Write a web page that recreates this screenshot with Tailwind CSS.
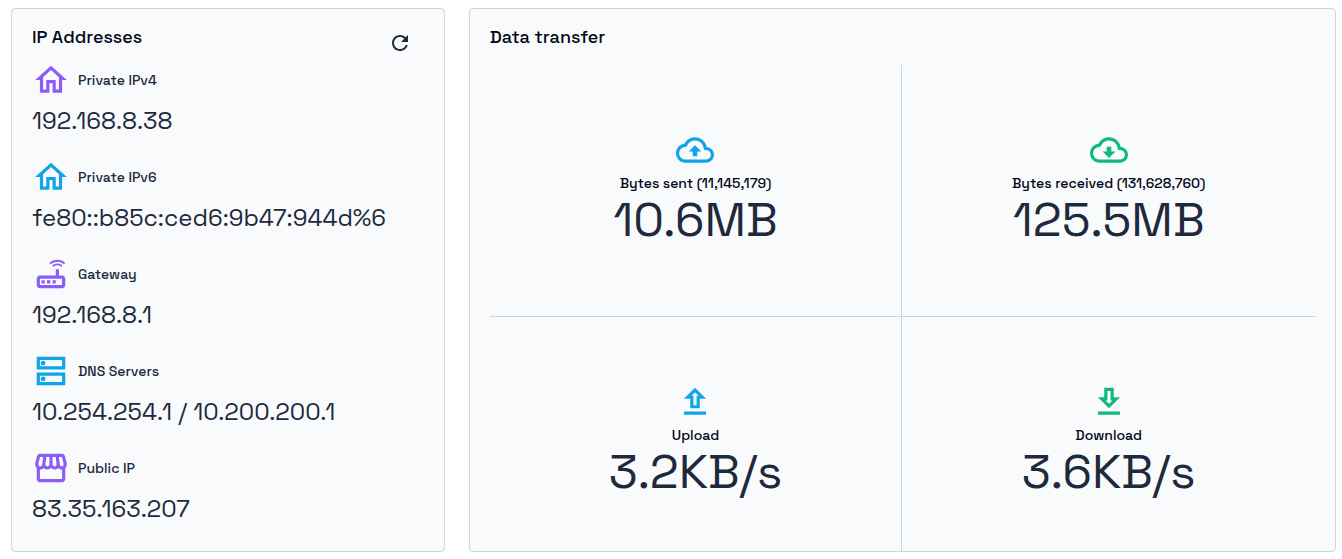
<!DOCTYPE html>
<html lang="en">
<head>
    <meta charset="UTF-8">
    <meta name="viewport" content="width=device-width, initial-scale=1">
    <title>Network</title>
    <script src="https://cdn.jsdelivr.net/npm/@tailwindcss/browser@4"></script>
</head>
<body class="bg-white text-[#1e293b] font-['Space_Grotesk',Inter,sans-serif]">

    <main class="grid grid-cols-[1fr_2fr] gap-6 pt-2 pb-[7px] pl-[11px] pr-[6px]">

        <!-- IP addresses -->
        <section class="bg-[#f8fafc] border border-[#cbd5e1] rounded px-5 pt-[14px] pb-6">
            <div class="flex items-start justify-between h-[38px]">
                <h2 class="text-lg font-medium text-[#020617]">IP Addresses</h2>
                <button type="button" aria-label="Refresh" class="flex items-center justify-center size-12 shrink-0 -mt-1 rounded-full">
                    <svg class="size-6" viewBox="0 0 24 24" fill="currentColor"><path d="M17.65 6.35A7.958 7.958 0 0 0 12 4c-4.42 0-7.99 3.58-7.99 8s3.57 8 7.99 8c3.73 0 6.84-2.55 7.73-6h-2.08A5.99 5.99 0 0 1 12 18c-3.31 0-6-2.69-6-6s2.69-6 6-6c1.66 0 3.14.69 4.22 1.78L13 11h7V4l-2.35 2.35z"/></svg>
                </button>
            </div>

            <dl class="flex flex-col gap-[19px]">
                <div>
                    <dt class="flex items-center gap-2 text-sm font-medium">
                        <svg class="size-[38px] text-[#8b5cf6]" viewBox="0 0 24 24" fill="currentColor"><path d="M12 5.69l5 4.5V18h-2v-6H9v6H7v-7.81l5-4.5M12 3L2 12h3v8h6v-6h2v6h6v-8h3L12 3z"/></svg>
                        Private IPv4
                    </dt>
                    <dd class="mt-1 text-2xl leading-9">192.168.8.38</dd>
                </div>
                <div>
                    <dt class="flex items-center gap-2 text-sm font-medium">
                        <svg class="size-[38px] text-[#0ea5e9]" viewBox="0 0 24 24" fill="currentColor"><path d="M12 5.69l5 4.5V18h-2v-6H9v6H7v-7.81l5-4.5M12 3L2 12h3v8h6v-6h2v6h6v-8h3L12 3z"/></svg>
                        Private IPv6
                    </dt>
                    <dd class="mt-1 text-2xl leading-9">fe80::b85c:ced6:9b47:944d%6</dd>
                </div>
                <div>
                    <dt class="flex items-center gap-2 text-sm font-medium">
                        <svg class="size-[38px] text-[#8b5cf6]" viewBox="0 0 24 24" fill="currentColor"><path d="M20.2 5.9l.8-.8C19.6 3.7 17.8 3 16 3s-3.6.7-5 2.1l.8.8C13 4.8 14.5 4.2 16 4.2s3 .6 4.2 1.7zm-.9.8c-.9-.9-2.1-1.4-3.3-1.4s-2.4.5-3.3 1.4l.8.8c.7-.7 1.6-1 2.5-1 .9 0 1.8.3 2.5 1l.8-.8zM19 13h-2V9h-2v4H5c-1.1 0-2 .9-2 2v4c0 1.1.9 2 2 2h14c1.1 0 2-.9 2-2v-4c0-1.1-.9-2-2-2zm0 6H5v-4h14v4zM6 16h2v2H6zm3.5 0h2v2h-2zm3.5 0h2v2h-2z"/></svg>
                        Gateway
                    </dt>
                    <dd class="mt-1 text-2xl leading-9">192.168.8.1</dd>
                </div>
                <div>
                    <dt class="flex items-center gap-2 text-sm font-medium">
                        <svg class="size-[38px] text-[#0ea5e9]" viewBox="0 0 24 24" fill="currentColor"><path fill-rule="evenodd" d="M3 3h18v8H3zM5 5v4h14V5zM3 13h18v8H3zM5 15v4h14v-4z"/><circle cx="7" cy="7" r="1.5"/><circle cx="7" cy="17" r="1.5"/></svg>
                        DNS Servers
                    </dt>
                    <dd class="mt-1 text-2xl leading-9">10.254.254.1 / 10.200.200.1</dd>
                </div>
                <div>
                    <dt class="flex items-center gap-2 text-sm font-medium">
                        <svg class="size-[38px] text-[#8b5cf6]" viewBox="0 0 24 24" fill="currentColor"><path d="M21.9 8.89l-1.05-4.37c-.22-.9-1-1.52-1.91-1.52H5.05c-.9 0-1.69.63-1.9 1.52L2.1 8.89c-.24 1.02-.02 2.06.62 2.88.08.11.19.19.28.29V19c0 1.1.9 2 2 2h14c1.1 0 2-.9 2-2v-6.94c.09-.09.2-.18.28-.28.64-.82.87-1.87.62-2.89zm-2.99-3.9l1.05 4.37c.1.42.01.84-.25 1.17-.14.18-.44.47-.94.47-.61 0-1.14-.49-1.21-1.14L16.98 5l1.93-.01zM13 5h1.96l.54 4.52c.05.39-.07.78-.33 1.07-.22.26-.54.41-.95.41-.67 0-1.22-.59-1.22-1.31V5zM8.49 9.52L9.04 5H11v4.69c0 .72-.55 1.31-1.29 1.31-.34 0-.65-.15-.89-.41-.25-.29-.37-.68-.33-1.07zm-4.45-.16L5.05 5h1.97l-.58 4.86c-.08.65-.6 1.14-1.21 1.14-.49 0-.8-.29-.93-.47-.27-.32-.36-.75-.26-1.17zM5 19v-6.03c.08.01.15.03.23.03.87 0 1.66-.36 2.24-.95.6.6 1.4.95 2.31.95.87 0 1.65-.36 2.23-.93.59.57 1.39.93 2.29.93.84 0 1.64-.35 2.24-.95.58.59 1.37.95 2.24.95.08 0 .15-.02.23-.03V19H5z"/></svg>
                        Public IP
                    </dt>
                    <dd class="mt-1 text-2xl leading-9">83.35.163.207</dd>
                </div>
            </dl>
        </section>

        <!-- Data transfer -->
        <section class="flex flex-col bg-[#f8fafc] border border-[#cbd5e1] rounded px-5 pt-[14px]">
            <h2 class="text-lg font-medium text-[#020617] mb-[14px]">Data transfer</h2>
            <div class="grid grid-cols-2 grid-rows-[auto_1fr] flex-1">
                <div class="flex flex-col items-center pt-[66px] pb-[69px] border-r border-b border-[#cbd5e1]">
                    <svg class="size-[38px] text-[#0ea5e9]" viewBox="0 0 24 24" fill="currentColor"><path d="M19.35 10.04C18.67 6.59 15.64 4 12 4 9.11 4 6.6 5.64 5.35 8.04 2.34 8.36 0 10.91 0 14c0 3.31 2.69 6 6 6h13c2.76 0 5-2.24 5-5 0-2.64-2.05-4.78-4.65-4.96zM19 18H6c-2.21 0-4-1.79-4-4 0-2.05 1.53-3.76 3.56-3.97l1.07-.11.5-.95C8.08 7.14 9.94 6 12 6c2.62 0 4.88 1.86 5.39 4.43l.3 1.5 1.53.11c1.56.1 2.78 1.41 2.78 2.96 0 1.65-1.35 3-3 3zM8 13h2.55v3h2.9v-3H16l-4-4z"/></svg>
                    <p class="mt-1 text-sm font-medium text-[#020617]">Bytes sent (11,145,179)</p>
                    <p class="text-5xl leading-[54px]">10.6MB</p>
                </div>
                <div class="flex flex-col items-center pt-[66px] pb-[69px] border-b border-[#cbd5e1]">
                    <svg class="size-[38px] text-[#10b981]" viewBox="0 0 24 24" fill="currentColor"><path d="M19.35 10.04C18.67 6.59 15.64 4 12 4 9.11 4 6.6 5.64 5.35 8.04 2.34 8.36 0 10.91 0 14c0 3.31 2.69 6 6 6h13c2.76 0 5-2.24 5-5 0-2.64-2.05-4.78-4.65-4.96zM19 18H6c-2.21 0-4-1.79-4-4 0-2.05 1.53-3.76 3.56-3.97l1.07-.11.5-.95C8.08 7.14 9.94 6 12 6c2.62 0 4.88 1.86 5.39 4.43l.3 1.5 1.53.11c1.56.1 2.78 1.41 2.78 2.96 0 1.65-1.35 3-3 3zM13.45 10h-2.9v3H8l4 4 4-4h-2.55z"/></svg>
                    <p class="mt-1 text-sm font-medium text-[#020617]">Bytes received (131,628,760)</p>
                    <p class="text-5xl leading-[54px]">125.5MB</p>
                </div>
                <div class="flex flex-col items-center pt-[66px] border-r border-[#cbd5e1]">
                    <svg class="size-[38px] text-[#0ea5e9]" viewBox="0 0 24 24" fill="currentColor"><path d="M9 16h6v-6h4l-7-7-7 7h4v6zm3-10.17L14.17 8H13v6h-2V8H9.83L12 5.83zM5 18h14v2H5z"/></svg>
                    <p class="mt-1 text-sm font-medium text-[#020617]">Upload</p>
                    <p class="text-5xl leading-[54px]">3.2KB/s</p>
                </div>
                <div class="flex flex-col items-center pt-[66px]">
                    <svg class="size-[38px] text-[#10b981]" viewBox="0 0 24 24" fill="currentColor"><path d="M19 9h-4V3H9v6H5l7 7 7-7zm-8 2V5h2v6h1.17L12 13.17 9.83 11H11zm-6 7h14v2H5z"/></svg>
                    <p class="mt-1 text-sm font-medium text-[#020617]">Download</p>
                    <p class="text-5xl leading-[54px]">3.6KB/s</p>
                </div>
            </div>
        </section>

    </main>

</body>
</html>
